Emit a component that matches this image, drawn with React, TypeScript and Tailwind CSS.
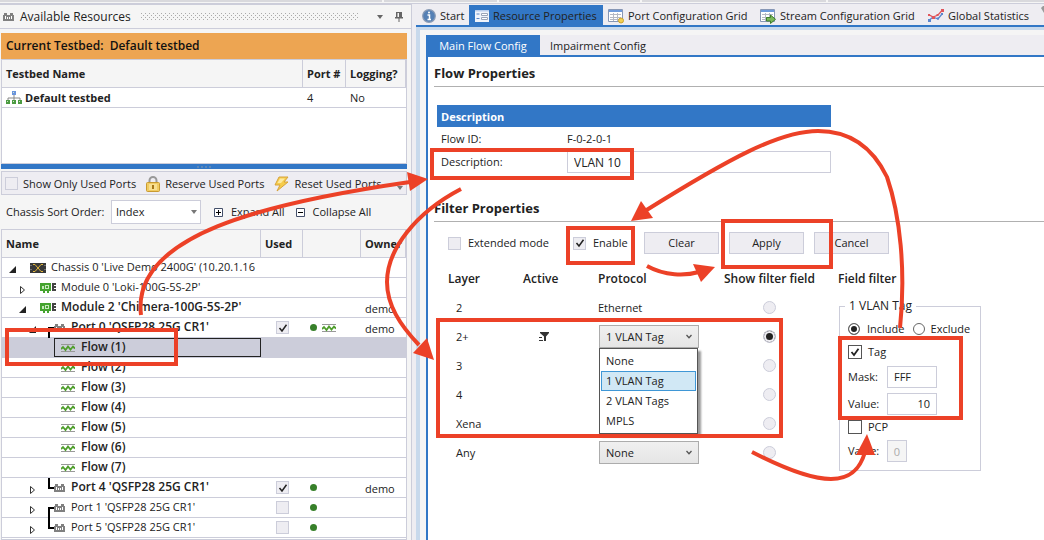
import { useState } from "react";
import type { ReactNode } from "react";
import clsx from "clsx";

type Row = {
  kind: "chassis" | "module" | "port" | "flow";
  name: string;
  open?: boolean;
  bold?: boolean;
  used?: boolean;
  wave?: boolean;
  owner?: string;
  link?: "down" | "up";
};

const rows: Row[] = [
  { kind: "chassis", name: "Chassis 0 'Live Demo 2400G' (10.20.1.16", open: true },
  { kind: "module", name: "Module 0 'Loki-100G-5S-2P'" },
  { kind: "module", name: "Module 2 'Chimera-100G-5S-2P'", open: true, bold: true, owner: "demo" },
  { kind: "port", name: "Port 0 'QSFP28 25G CR1'", open: true, bold: true, used: true, wave: true, owner: "demo", link: "down" },
  { kind: "flow", name: "Flow (1)" },
  { kind: "flow", name: "Flow (2)" },
  { kind: "flow", name: "Flow (3)" },
  { kind: "flow", name: "Flow (4)" },
  { kind: "flow", name: "Flow (5)" },
  { kind: "flow", name: "Flow (6)" },
  { kind: "flow", name: "Flow (7)" },
  { kind: "port", name: "Port 4 'QSFP28 25G CR1'", bold: true, used: true, owner: "demo", link: "up" },
  { kind: "port", name: "Port 1 'QSFP28 25G CR1'", used: false, link: "down" },
  { kind: "port", name: "Port 5 'QSFP28 25G CR1'", used: false, link: "up" },
];

const layers = [
  { layer: "2", protocol: "Ethernet" },
  { layer: "2+", options: ["1 VLAN Tag", "None", "2 VLAN Tags", "MPLS"], active: true },
  { layer: "3", options: ["None"] },
  { layer: "4", options: ["None"] },
  { layer: "Xena", options: ["None"] },
  { layer: "Any", options: ["None"] },
];

const vlanOptions = ["None", "1 VLAN Tag", "2 VLAN Tags", "MPLS"];

const PortIcon = ({ className }: { className?: string }) => (
  <svg className={clsx("shrink-0", className)} viewBox="0 0 11 8" shapeRendering="crispEdges">
    <path d="M0 2h1V0h3v2h3V0h3v2h1v6H0z" fill="#808080" />
    <path d="M2 3h1v3H2zM4 4h1v2H4zM6 4h1v2H6zM8 3h1v3H8z" fill="#fff" />
  </svg>
);

const WaveIcon = () => (
  <svg className="h-2.5 w-3.5 shrink-0" viewBox="0 0 14 10" fill="none">
    <path d="M0 1.500h14M0 8.500h14" stroke="#999" />
    <path d="M0 6l2-2 2.500 3L7 3.500l2.500 3L12 3.500l2 2" stroke="#4f9e2c" strokeWidth="1.800" />
  </svg>
);

const ModuleIcon = () => (
  <svg className="h-2.5 w-4 shrink-0" viewBox="0 0 16 10">
    <path d="M0 0h11v8H9v2H7V8H5v2H3V8H0z" fill="#45a32f" />
    <path d="M2 3h2v3H2zM5 2h4v4H5z" fill="#c7e8bd" />
    <path d="M6 3h2v2H6z" fill="#45a32f" />
    <path d="M12 0h4v2h-2v1h2v2h-2v1h2v2h-4z" fill="#444" />
  </svg>
);

const ChassisIcon = () => (
  <svg className="h-2.5 w-4 shrink-0" viewBox="0 0 16 10">
    <path d="M0 0h16v10H0z" fill="#383838" />
    <path d="M1 2v1M1 6v1M15 2v1M15 6v1" stroke="#aaa" />
    <path d="M3 1.500l2 0 6 7h2M13 1.500h-2l-6 7H3" stroke="#e0b53c" fill="none" />
  </svg>
);

const Expander = ({ open }: { open?: boolean }) => (
  <svg className="mt-1 h-2.5 w-2 shrink-0" viewBox="0 0 8 10">
    {open ? (
      <path d="M7 1v7H0z" fill="#222" />
    ) : (
      <path d="M1.500 1.500v7l4-3.500z" fill="#fff" stroke="#333" />
    )}
  </svg>
);

const Link = ({ link }: { link?: "down" | "up" }) => (
  <svg className="h-5 w-1.5 shrink-0" viewBox="0 0 6 20" fill="none" stroke="#000" strokeWidth="2">
    <path d={link === "down" ? "M6 10H1v10" : "M1 0v10h5"} />
  </svg>
);

type BoxProps = { label: string; checked?: boolean; dark?: boolean; className?: string; hideLabel?: boolean };

const Check = ({ label, checked = false, dark, className, hideLabel }: BoxProps) => {
  const [on, setOn] = useState(checked);
  return (
    <label className={clsx("items-center whitespace-nowrap", className)}>
      <span className="grid place-items-center">
        <input
          type="checkbox"
          checked={on}
          onChange={() => setOn(!on)}
          aria-label={label}
          className={clsx(
            "col-start-1 row-start-1 appearance-none border",
            dark ? "size-3.5 border-[#555] bg-white" : "size-[13px] border-[#cccdda] bg-[#eeedf2]"
          )}
        />
        {on && (
          <svg className="pointer-events-none col-start-1 row-start-1 size-2.5" viewBox="0 0 10 10" fill="none">
            <path d="M1.500 5l2.500 3L8.500 1.800" stroke="#222" strokeWidth={dark ? 1.8 : 1.5} />
          </svg>
        )}
      </span>
      {!hideLabel && label}
    </label>
  );
};

const Radio = ({ name, label, checked, dark }: { name: string; label: string; checked?: boolean; dark?: boolean }) => (
  <input
    type="radio"
    name={name}
    aria-label={label}
    defaultChecked={checked}
    className={clsx(
      "block shrink-0 appearance-none rounded-full border checked:bg-[#222]",
      dark
        ? "size-3 border-[#666] bg-white checked:shadow-[inset_0_0_0_2px_#fff]"
        : "size-[13px] border-[#cccdda] bg-[#eeedf2] checked:shadow-[inset_0_0_0_2px_#eeedf2]"
    )}
  />
);

const ProtocolSelect = ({ label, options }: { label: string; options: string[] }) => (
  <div className="grid w-[100px] items-center">
    <select
      aria-label={label}
      className="col-start-1 row-start-1 h-[23px] w-full appearance-none border border-[#acacac] bg-linear-to-b from-[#f0f0f0] to-[#e5e5e5] px-1.5"
    >
      {options.map((o) => (
        <option key={o}>{o}</option>
      ))}
    </select>
    <svg className="pointer-events-none col-start-1 row-start-1 mr-1.5 h-1.5 w-2 justify-self-end" viewBox="0 0 8 6" fill="none">
      <path d="M1.500 1L4 3.800 6.500 1" stroke="#555" strokeWidth="1.300" />
    </svg>
  </div>
);

const TreeName = ({ row, selected }: { row: Row; selected: boolean }) => {
  if (row.kind === "flow")
    return (
      <div className="pl-[52px]">
        <div
          className={clsx(
            "flex h-[19px] items-center gap-1.5 border pl-1.5 text-[12px] font-semibold",
            selected ? "border-[#222]" : "border-transparent"
          )}
        >
          <WaveIcon />
          <span className="pb-0.5">{row.name}</span>
        </div>
      </div>
    );
  return (
    <div
      className={clsx(
        "flex h-[19px] items-center whitespace-nowrap",
        row.kind === "chassis" && "pl-[7px]",
        row.kind === "module" && "pl-[17px]",
        row.kind === "port" && "pl-[27px]",
        row.bold && "text-[12px] font-semibold"
      )}
    >
      <Expander open={row.open} />
      {row.kind === "port" ? (
        <span className="ml-[11px] flex items-center">
          <Link link={row.link} />
          <PortIcon className="mr-px h-2 w-[11px]" />
        </span>
      ) : (
        <span className="ml-[13px]">{row.kind === "chassis" ? <ChassisIcon /> : <ModuleIcon />}</span>
      )}
      <span className="ml-[5px] pb-0.5">{row.name}</span>
    </div>
  );
};

const Resources = () => {
  const [selected, setSelected] = useState("Flow (1)");
  return (
    <aside className="flex w-[412px] shrink-0 flex-col border-t border-r border-[#cccdda] bg-[#f5f5f5]">
      <header className="flex h-6 items-center border-b border-[#cccdda] pt-px pr-2 pl-[3px]">
        <PortIcon className="h-2 w-[11px]" />
        <h2 className="ml-1.5 text-[12px]">Available Resources</h2>
        <svg className="mx-2.5 h-2 flex-1">
          <defs>
            <pattern id="grip" width="4" height="4" patternUnits="userSpaceOnUse">
              <path d="M0 0h1v1H0zM2 2h1v1H2z" fill="#aaa" />
            </pattern>
          </defs>
          <rect width="100%" height="8" fill="url(#grip)" />
        </svg>
        <button aria-label="Window menu" className="mx-2">
          <svg className="h-1 w-1.5" viewBox="0 0 6 4">
            <path d="M0 0h6L3 4z" fill="#666" />
          </svg>
        </button>
        <button aria-label="Pin" className="ml-1">
          <svg className="h-2.5 w-2" viewBox="0 0 8 10" fill="#666">
            <path d="M1 0h6v5h1v1.500H4.500V10h-1V6.500H0V5h1zM2.500 1v4H4V1z" fillRule="evenodd" />
          </svg>
        </button>
      </header>

      <div className="mt-1 mr-1 ml-px">
        <div className="flex h-[26px] items-center bg-[#eda552] pl-[5px] text-[12px] font-semibold text-[#111]">
          Current Testbed:&nbsp; Default testbed
        </div>
        <div className="h-[105px] border border-[#cccdda] bg-white">
          <table className="w-full table-fixed border-separate border-spacing-0">
            <colgroup>
              <col />
              <col className="w-[43px]" />
              <col className="w-[60px]" />
            </colgroup>
            <thead>
              <tr className="h-7 bg-[#f5f5f5] text-left whitespace-nowrap [&>th]:border-r [&>th]:border-b [&>th]:border-[#cccdda] [&>th]:pl-1 [&>th]:font-bold">
                <th>Testbed Name</th>
                <th>Port #</th>
                <th>Logging?</th>
              </tr>
            </thead>
            <tbody>
              <tr className="h-5 [&>td]:border-b [&>td]:border-[#cccdda] [&>td]:pl-1">
                <td>
                  <div className="flex items-center gap-[3px] font-bold">
                    <svg className="h-3.5 w-4" viewBox="0 0 16 14">
                      <path d="M8 4v3M2 9V7h12v2M8 7v2" stroke="#888" fill="none" />
                      <path d="M6 0h4v4H6z" fill="#6a94dc" />
                      <path d="M0 9h4v4H0zM6 9h4v4H6zM12 9h4v4h-4z" fill="#4c9b42" />
                      <path d="M1 10h1v1H1zM7 10h1v1H7zM13 10h1v1h-1zM7 1h1v1H7z" fill="#cfe6cc" />
                    </svg>
                    Default testbed
                  </div>
                </td>
                <td>4</td>
                <td>No</td>
              </tr>
            </tbody>
          </table>
        </div>
        <div className="flex h-[5px] items-center justify-center gap-[2px] bg-[#3277c6]">
          <i className="size-0.5 bg-[#5c87b8]" />
          <i className="size-0.5 bg-[#5c87b8]" />
          <i className="size-0.5 bg-[#5c87b8]" />
          <i className="size-0.5 bg-[#5c87b8]" />
        </div>

        <div className="mt-0.5 flex h-6 items-center border border-[#cccdda] bg-[#eeedf2] pt-px pl-[3px]">
          <Check label="Show Only Used Ports" className="flex gap-[5px]" />
          <button className="ml-2.5 flex items-center gap-[5px] whitespace-nowrap">
            <svg className="h-4 w-3.5" viewBox="0 0 14 16">
              <path d="M3.500 8V4.500a3.500 3.500 0 0 1 7 0V8" stroke="#999" strokeWidth="2" fill="none" />
              <rect x=".5" y="6.500" width="13" height="9" rx="1" fill="#f1cc62" stroke="#c99b30" />
              <path d="M3 9h8M3 11h8M3 13h8" stroke="#fff3c0" />
              <path d="M6 9h2v4H6z" fill="#a87817" />
            </svg>
            Reserve Used Ports
          </button>
          <button className="ml-2.5 flex items-center gap-[5px] whitespace-nowrap">
            <svg className="h-4 w-[15px]" viewBox="0 0 15 16">
              <path d="M5 1h9l-4 5h4L3 15l3-6H1z" fill="#f6cd4c" stroke="#d6a33c" />
              <path d="M6 2.500h5L7 7H3.500z" fill="#fdeaa0" />
            </svg>
            Reset Used Ports
          </button>
          <svg className="mt-2 mr-[3px] ml-auto h-1 w-1.5" viewBox="0 0 6 4">
            <path d="M0 0h6L3 4z" fill="#777" />
          </svg>
        </div>

        <div className="flex h-[34px] items-center pl-[5px] whitespace-nowrap">
          <label htmlFor="sort" className="w-[105px]">
            Chassis Sort Order:
          </label>
          <div className="grid w-[90px] items-center">
            <select
              id="sort"
              className="col-start-1 row-start-1 h-6 w-full appearance-none border border-[#cccdda] bg-white px-1"
            >
              <option>Index</option>
              <option>Name</option>
            </select>
            <svg className="pointer-events-none col-start-1 row-start-1 mr-1 h-1 w-1.5 justify-self-end" viewBox="0 0 6 4">
              <path d="M0 0h6L3 4z" fill="#777" />
            </svg>
          </div>
          <button className="ml-[13px] flex items-center gap-2">
            <svg className="size-[9px]" viewBox="0 0 9 9">
              <path d="M.5.5h8v8h-8z" fill="#fff" stroke="#44506a" />
              <path d="M2 4.500h5M4.500 2v5" stroke="#000" />
            </svg>
            Expand All
          </button>
          <button className="ml-[11px] flex items-center gap-2">
            <svg className="size-[9px]" viewBox="0 0 9 9">
              <path d="M.5.5h8v8h-8z" fill="#fff" stroke="#44506a" />
              <path d="M2 4.500h5" stroke="#000" />
            </svg>
            Collapse All
          </button>
        </div>
      </div>

      <div className="mr-1 ml-px flex-1 border border-[#cccdda] bg-white">
        <table className="w-full table-fixed border-separate border-spacing-0">
          <colgroup>
            <col />
            <col className="w-[42px]" />
            <col className="w-[58px]" />
            <col className="w-[45px]" />
          </colgroup>
          <thead>
            <tr className="h-7 bg-[#f5f5f5] text-left [&>th]:overflow-hidden [&>th]:border-r [&>th]:border-b [&>th]:border-[#cccdda] [&>th]:pl-1 [&>th]:font-bold">
              <th>Name</th>
              <th>Used</th>
              <th aria-label="Status" />
              <th>Owner</th>
            </tr>
          </thead>
          <tbody>
            {rows.map((row) => (
              <tr
                key={row.name}
                onClick={() => setSelected(row.name)}
                className={clsx(
                  "h-5 leading-[17px] [&>td]:border-b [&>td]:border-[#cccdda]",
                  selected === row.name && "bg-[#cccdda]"
                )}
              >
                <td>
                  <TreeName row={row} selected={selected === row.name} />
                </td>
                <td>
                  {row.used !== undefined && (
                    <Check label={row.name + " used"} checked={row.used} hideLabel className="flex h-[19px] pl-[15px]" />
                  )}
                </td>
                <td>
                  {row.used !== undefined && (
                    <div className="flex items-center gap-[5px] pl-[7px]">
                      <span className="size-[7px] rounded-full bg-[#37802a]" />
                      {row.wave && <WaveIcon />}
                    </div>
                  )}
                </td>
                <td>{row.owner && <div className="h-[19px] pt-0.5 pl-1">{row.owner}</div>}</td>
              </tr>
            ))}
          </tbody>
        </table>
      </div>
    </aside>
  );
};

const GridIcon = ({ children }: { children?: ReactNode }) => (
  <svg className="size-4 shrink-0" viewBox="0 0 16 16">
    <path d="M.5 1.500h14v12H.5z" fill="#fff" stroke="#8797b5" />
    <path d="M1 2h13v2H1z" fill="#6d9adc" />
    <path d="M2 6.500h11M2 9.500h11M2 11.500h11M5.500 5v8M9.500 5v8" stroke="#b5b9c5" />
    {children}
  </svg>
);

const tabs = [
  {
    name: "Start",
    className: "w-[53px] pl-1.5",
    icon: (
      <svg className="size-3.5 shrink-0" viewBox="0 0 14 14">
        <circle cx="7" cy="7" r="6.300" fill="#5580b5" stroke="#8a9bb5" strokeWidth="1.200" />
        <path d="M5.500 6h2v4M5.500 10.500h3.500" stroke="#fff" strokeWidth="1.500" fill="none" />
        <circle cx="7" cy="3.500" r="1" fill="#fff" />
      </svg>
    ),
  },
  {
    name: "Resource Properties",
    className: "w-[134px] bg-[#3277c6] pl-1.5",
    icon: (
      <svg className="size-3.5 shrink-0" viewBox="0 0 14 14">
        <path d="M0 1h14v12H0z" fill="#f0f4fb" />
        <path d="M0 1h14v1.500H0z" fill="#b8cdec" />
        <path d="M1.500 5h3M1.500 9.500h3" stroke="#5b86c8" />
        <path d="M6.500 4.500h6v2h-6zM6.500 8.500h6v2h-6z" fill="#fff" stroke="#9aa4b8" />
      </svg>
    ),
  },
  {
    name: "Port Configuration Grid",
    className: "w-[151px] pl-[5px]",
    icon: (
      <GridIcon>
        <circle cx="13" cy="12.500" r="2.500" fill="#f3d052" stroke="#c9a22d" />
      </GridIcon>
    ),
  },
  {
    name: "Stream Configuration Grid",
    className: "w-[167px] pl-1.5",
    icon: (
      <GridIcon>
        <path d="M6.500 9.500h4V7l5 4.300-5 4.200v-2.500h-4z" fill="#79b858" stroke="#3f7d2c" />
      </GridIcon>
    ),
  },
  {
    name: "Global Statistics",
    className: "w-[113px] pl-[7px]",
    icon: (
      <svg className="size-4 shrink-0" viewBox="0 0 16 16" fill="none">
        <path d="M1.500 12L5 9l5 2 4-5" stroke="#5a86cf" strokeWidth="1.300" />
        <path d="M1.500 7L5 9l5-2 4-4.500" stroke="#e0565c" strokeWidth="1.300" />
        <path d="M0 11h3v3H0zM9 9.500h2v2H9zM13 5h2v2h-2z" fill="#5a86cf" />
        <path d="M0 6h2v2H0zM4 8h3v3H4zM13 1h3v3h-3zM8.500 6h2v2h-2z" fill="#e0565c" />
      </svg>
    ),
  },
];

const FilterTable = () => (
  <table className="w-[390px] shrink-0 table-fixed border-separate border-spacing-0">
    <colgroup>
      <col className="w-[75px]" />
      <col className="w-[75px]" />
      <col className="w-[126px]" />
      <col />
    </colgroup>
    <thead>
      <tr className="h-7 text-left text-[12px] whitespace-nowrap [&>th]:font-semibold">
        <th>Layer</th>
        <th>Active</th>
        <th>Protocol</th>
        <th>Show filter field</th>
      </tr>
    </thead>
    <tbody>
      {layers.map((l) => (
        <tr key={l.layer} className="h-[29px]">
          <td className="pl-2">{l.layer}</td>
          <td>
            {l.active && (
              <svg className="ml-4 size-2.5" viewBox="0 0 10 10" fill="#333">
                <path d="M1 0h9v1L7 4.500V9H5V4.500L1 1zM0 5h3v1H0zM0 8h4v1H0z" />
              </svg>
            )}
          </td>
          <td>
            {l.options ? (
              <div className="relative pl-px">
                <ProtocolSelect label={"Layer " + l.layer + " protocol"} options={l.options} />
                {l.active && (
                  <ul
                    role="listbox"
                    aria-label="Protocols"
                    className="absolute top-full left-px z-10 w-[99px] border border-[#555] bg-white px-px py-0.5 shadow-[3px_3px_2px_#999]"
                  >
                    {vlanOptions.map((o) => (
                      <li
                        key={o}
                        role="option"
                        aria-selected={o === "1 VLAN Tag"}
                        className={clsx(
                          "flex h-5 items-center border px-1",
                          o === "1 VLAN Tag" ? "border-[#3f97d6] bg-[#d1e8f5]" : "border-transparent"
                        )}
                      >
                        {o}
                      </li>
                    ))}
                  </ul>
                )}
              </div>
            ) : (
              l.protocol
            )}
          </td>
          <td className="pl-[39px]">
            <Radio name="show-field" label={"Show layer " + l.layer} checked={l.active} />
          </td>
        </tr>
      ))}
    </tbody>
  </table>
);

const FieldFilter = () => (
  <div>
    <h4 className="flex h-7 items-center text-[12px] font-semibold">Field filter</h4>
    <fieldset className="mt-[5px] ml-px w-[142px] border border-[#cccdda] px-2 pb-[5px]">
      <legend className="mx-[-3px] px-1 text-[12px]">1 VLAN Tag</legend>
      <div className="mt-[3px] flex h-6 items-center gap-2 whitespace-nowrap">
        <label className="flex items-center gap-[7px]">
          <Radio name="mode" label="Include" checked dark />
          Include
        </label>
        <label className="flex items-center gap-1.5">
          <Radio name="mode" label="Exclude" dark />
          Exclude
        </label>
      </div>
      <Check label="Tag" checked dark className="flex h-[22px] gap-1.5" />
      <div className="flex h-[27px] items-center">
        <label htmlFor="mask" className="w-[39px]">
          Mask:
        </label>
        <input id="mask" defaultValue="FFF" className="h-[22px] w-[50px] border border-[#cccdda] bg-white px-1.5" />
      </div>
      <div className="flex h-[27px] items-center">
        <label htmlFor="tag-value" className="w-[39px]">
          Value:
        </label>
        <input
          id="tag-value"
          defaultValue="10"
          className="h-[22px] w-[50px] border border-[#cccdda] bg-white px-1.5 text-right"
        />
      </div>
      <Check label="PCP" dark className="flex h-5 gap-1.5" />
      <div className="flex h-7 items-center">
        <label htmlFor="pcp-value" className="w-[39px]">
          Value:
        </label>
        <input
          id="pcp-value"
          disabled
          defaultValue="0"
          className="h-[22px] w-5 border border-[#cccdda] bg-[#f5f5f5] text-center text-[#aaa]"
        />
      </div>
    </fieldset>
  </div>
);

const SectionTitle = ({ children }: { children: ReactNode }) => (
  <h3 className="flex h-[27px] items-center border-b border-[#b0b0b0] text-[13px] font-bold">{children}</h3>
);

const Properties = () => (
  <main className="ml-1 flex min-w-0 flex-1 flex-col">
    <nav className="mt-px flex h-[22px] border-b-2 border-[#3277c6]">
      {tabs.map((tab) => (
        <button
          key={tab.name}
          className={clsx("flex shrink-0 items-center gap-1 pt-0.5 whitespace-nowrap", tab.className)}
        >
          {tab.icon}
          {tab.name}
        </button>
      ))}
      <svg className="ml-1.5 size-3.5 shrink-0" viewBox="0 0 14 14">
        <path d="M1 3l3 5 3-2 5 6 2-2-6-6V1H3z" fill="#999" />
      </svg>
    </nav>
    <div className="flex flex-1 flex-col border-t-3 border-l-4 border-[#c8d9ec] bg-[#f5f5f5] pt-[5px] pl-1.5">
      <div className="flex h-[22px] border-b-2 border-[#3277c6] bg-[#eeedf2]">
        <button className="w-[114px] bg-[#3277c6] pt-0.5 whitespace-nowrap text-white">Main Flow Config</button>
        <button className="px-2.5 pt-0.5 whitespace-nowrap">Impairment Config</button>
      </div>
      <div className="flex-1 border-l-2 border-[#3277c6] bg-white pt-[3px] pl-1.5">
        <SectionTitle>Flow Properties</SectionTitle>
        <div className="mt-[18px] ml-[3px] w-[394px]">
          <h4 className="flex h-[22px] items-center bg-[#3277c6] pt-0.5 pl-1 text-[11px] font-bold text-white">
            Description
          </h4>
          <div className="flex h-6 items-center pl-1">
            <span className="w-[126px]">Flow ID:</span>
            F-0-2-0-1
          </div>
          <div className="flex h-[22px] items-center pl-1">
            <label htmlFor="description" className="w-[126px]">
              Description:
            </label>
            <input
              id="description"
              defaultValue="VLAN 10"
              className="h-[22px] min-w-0 flex-1 border border-[#cccdda] bg-white px-1.5 text-[12px]"
            />
          </div>
        </div>
        <div className="mt-[22px]">
          <SectionTitle>Filter Properties</SectionTitle>
        </div>
        <div className="mt-2.5 flex h-[22px] items-center pl-3.5">
          <Check label="Extended mode" className="flex w-[125px] gap-[7px]" />
          <Check label="Enable" checked className="flex w-[71px] gap-[7px]" />
          <div className="flex gap-2.5">
            {["Clear", "Apply", "Cancel"].map((b) => (
              <button key={b} className="h-[22px] w-[75px] border border-[#cccdda] bg-[#eeedf2]">
                {b}
              </button>
            ))}
          </div>
        </div>
        <div className="mt-[11px] flex items-start pl-3.5">
          <FilterTable />
          <FieldFilter />
        </div>
      </div>
    </div>
  </main>
);

// numbered steps are walked through with boxes and arrows laid over the window
const Annotations = () => (
  <svg
    className="pointer-events-none absolute top-0 left-0 z-20 h-[540px] w-[1044px]"
    viewBox="0 0 1044 540"
    fill="none"
    stroke="#ec4127"
    strokeWidth="4"
  >
    <rect x="7" y="330" width="169" height="34" />
    <rect x="432" y="150" width="200" height="28" />
    <rect x="568" y="228" width="65" height="35" />
    <rect x="723" y="221" width="108" height="46" />
    <rect x="438" y="320" width="343" height="116" />
    <rect x="840" y="338" width="121" height="80" />
    <path d="M141 315C131 235 265 203 410 182" />
    <path d="M461 189C415 213 387 250 387 282C387 305 400 325 419 345" />
    <path d="M647 266C665 276 685 276 699 272" />
    <path d="M900 328C906 270 900 215 887 177C870 142 845 131 818 131C780 131 730 158 645 211" />
    <path d="M752 452C785 469 812 479 831 479C853 479 861 466 865 452" />
    <g fill="#ec4127" stroke="none">
      <path d="M428 179L407 172L410 191z" />
      <path d="M434 360L413 353L427 338z" />
      <path d="M715 267L693 264L701 282z" />
      <path d="M631 221L641 201L653 218z" />
      <path d="M867 434L856 455L875 455z" />
    </g>
  </svg>
);

const App = () => (
  <div className="relative flex h-screen flex-col overflow-hidden bg-[#eeedf2] font-['Open_Sans','Noto_Sans',sans-serif] text-[11px] leading-4 text-[#222]">
    <div className="flex h-1 shrink-0 gap-0.5 border-b border-[#cccdda] bg-[#f5f5f5] pb-px">
      <div className="w-[382px] bg-[#d9d9dd]" />
      <div className="w-[113px] bg-[#d9d9dd]" />
      <div className="w-[141px] bg-[#d9d9dd]" />
      <div className="w-[184px] bg-[#d9d9dd]" />
      <div className="flex-1 bg-[#d9d9dd]" />
    </div>
    <div className="flex min-h-0 flex-1">
      <Resources />
      <Properties />
    </div>
    <Annotations />
  </div>
);

export default App;
